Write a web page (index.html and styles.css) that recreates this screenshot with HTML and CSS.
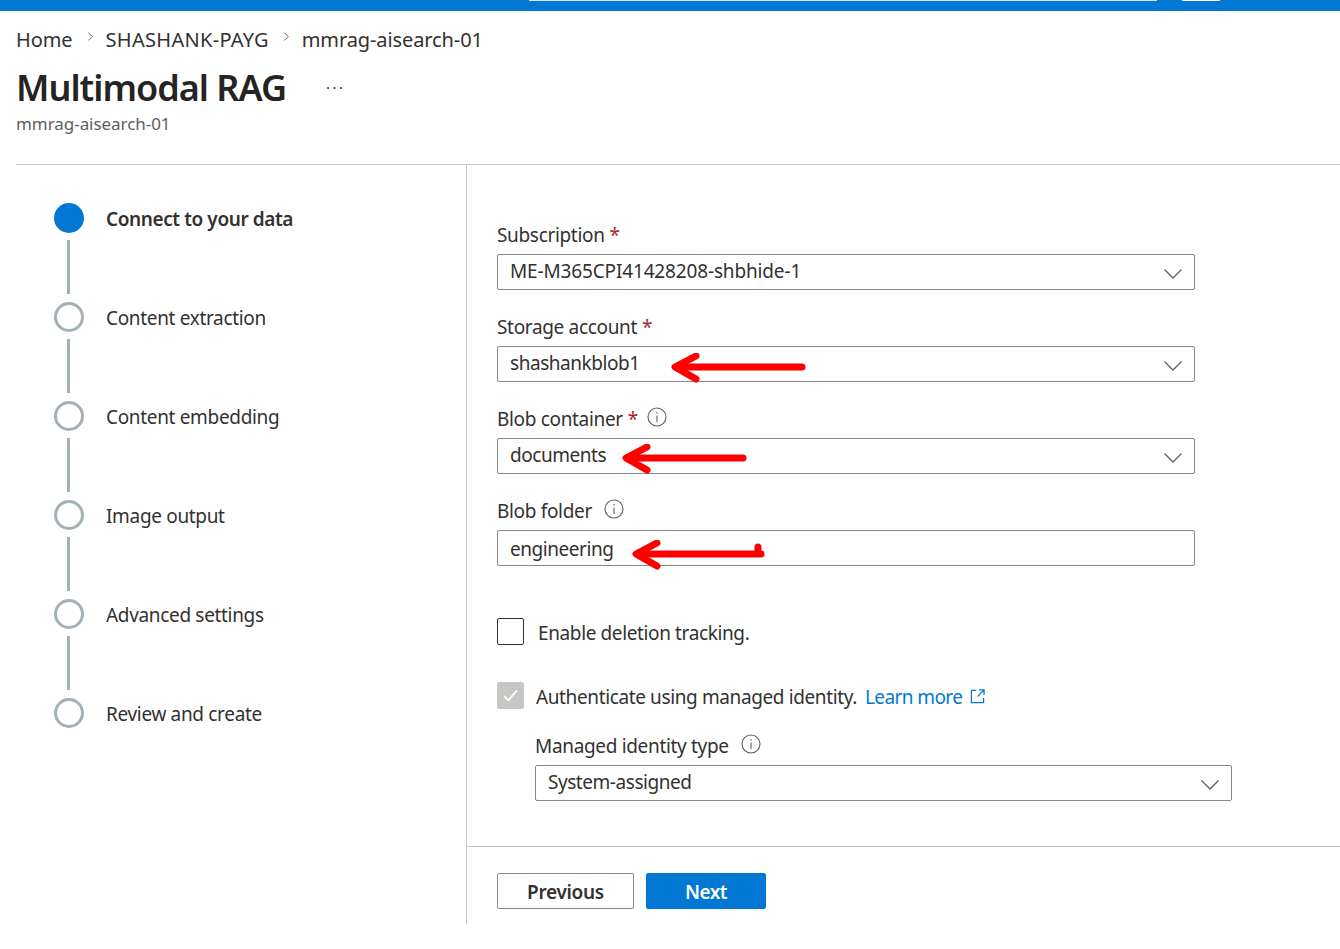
FILE: index.html
```html
<!DOCTYPE html>
<html lang="en">
<head>
    <meta charset="UTF-8">
    <meta name="viewport" content="width=device-width, initial-scale=1.0">
    <title>Multimodal RAG</title>
    <link rel="stylesheet" href="styles.css">
</head>
<body>

<div class="topbar">
    <div class="topbar-search"></div>
    <div class="topbar-button"></div>
</div>

<div class="page-head">
    <div class="breadcrumb">
        <span>Home</span>
        <svg class="crumb-sep" viewBox="0 0 8 12"><path d="M1.5 1.5 6 6l-4.500 4.500"/></svg>
        <span class="crumb-caps">SHASHANK-PAYG</span>
        <svg class="crumb-sep" viewBox="0 0 8 12"><path d="M1.5 1.5 6 6l-4.500 4.500"/></svg>
        <span>mmrag-aisearch-01</span>
    </div>
    <div class="title-row">
        <h1>Multimodal RAG</h1>
        <span class="more">···</span>
    </div>
    <div class="subtitle">mmrag-aisearch-01</div>
</div>

<div class="wizard">
    <div class="steps">
        <div class="step active">
            <div class="step-dot"></div>
            <span class="step-name">Connect to your data</span>
        </div>
        <div class="step">
            <div class="step-dot"></div>
            <span class="step-name">Content extraction</span>
        </div>
        <div class="step">
            <div class="step-dot"></div>
            <span class="step-name">Content embedding</span>
        </div>
        <div class="step">
            <div class="step-dot"></div>
            <span class="step-name">Image output</span>
        </div>
        <div class="step">
            <div class="step-dot"></div>
            <span class="step-name">Advanced settings</span>
        </div>
        <div class="step">
            <div class="step-dot"></div>
            <span class="step-name">Review and create</span>
        </div>
    </div>

    <div class="panel">
        <div class="form">
            <div class="field">
                <div class="field-label">Subscription <span class="req">*</span></div>
                <div class="box">
                    <span class="value-id">ME-M365CPI41428208-shbhide-1</span>
                    <svg class="chevron" viewBox="0 0 18 10"><path d="M.5.5 9 9 17.500.5"/></svg>
                </div>
            </div>
            <div class="field">
                <div class="field-label">Storage account <span class="req">*</span></div>
                <div class="box">
                    <span>shashankblob1</span>
                    <svg class="chevron" viewBox="0 0 18 10"><path d="M.5.5 9 9 17.500.5"/></svg>
                    <svg class="arrow arrow-storage" viewBox="0 0 136 30"><path d="M131 14H6"/><path d="M25 3 4 14l21 12"/></svg>
                </div>
            </div>
            <div class="field">
                <div class="field-label">Blob container <span class="req">*</span>
                    <svg class="info" viewBox="0 0 20 20"><circle cx="10" cy="10" r="9"/><path d="M10 8.500V15M10 5v1.500"/></svg>
                </div>
                <div class="box">
                    <span>documents</span>
                    <svg class="chevron" viewBox="0 0 18 10"><path d="M.5.5 9 9 17.500.5"/></svg>
                    <svg class="arrow arrow-container" viewBox="0 0 136 30"><path d="M121 14H6"/><path d="M25 3 4 14l21 12"/></svg>
                </div>
            </div>
            <div class="field">
                <div class="field-label">Blob folder
                    <svg class="info" viewBox="0 0 20 20"><circle cx="10" cy="10" r="9"/><path d="M10 8.500V15M10 5v1.500"/></svg>
                </div>
                <div class="box text-input">
                    <span>engineering</span>
                    <svg class="arrow arrow-folder" viewBox="0 0 136 30"><path d="M129 14H6M126 14v-7"/><path d="M25 3 4 14l21 12"/></svg>
                </div>
            </div>

            <label class="check check-deletion">
                <span class="checkbox"></span>
                <span class="check-text">Enable deletion tracking.</span>
            </label>

            <div class="check check-identity">
                <span class="checkbox disabled">
                    <svg viewBox="0 0 16 16"><path d="M2 8.500 6 12.500 14 3.500"/></svg>
                </span>
                <span class="check-text">Authenticate using managed identity.</span>
                <a class="learn" href="#">Learn more
                    <svg viewBox="0 0 16 16"><path d="M6.500 1.500H1.500v13h13v-5M9.500 1h5.500v5.500M15 1 8 8"/></svg>
                </a>
            </div>

            <div class="field nested">
                <div class="field-label">Managed identity type
                    <svg class="info" viewBox="0 0 20 20"><circle cx="10" cy="10" r="9"/><path d="M10 8.500V15M10 5v1.500"/></svg>
                </div>
                <div class="box">
                    <span>System-assigned</span>
                    <svg class="chevron" viewBox="0 0 18 10"><path d="M.5.5 9 9 17.500.5"/></svg>
                </div>
            </div>
        </div>

        <div class="actions">
            <button class="btn">Previous</button>
            <button class="btn primary">Next</button>
        </div>
    </div>
</div>

</body>
</html>
```

FILE: styles.css
```css
body {
    font-family: "Noto Sans", "Open Sans", sans-serif;
    font-size: 19px;
    color: #323130;
    margin: 0;
    background-color: #ffffff;
}
.topbar {
    height: 11px;
    background-color: #0078d4;
    display: flex;
    padding-left: 529px;
}
.topbar-search {
    width: 628px;
    height: 1px;
    background-color: #d8e6f2;
}
.topbar-button {
    width: 38px;
    height: 1px;
    margin-left: 25px;
    background-color: #ffffff;
}
.page-head {
    padding-left: 16px;
}
.breadcrumb {
    display: flex;
    align-items: center;
    height: 28px;
    margin-top: 14px;
    font-size: 20px;
    letter-spacing: -0.1px;
}
.crumb-caps {
    letter-spacing: 0.3px;
}
.crumb-sep {
    width: 7px;
    height: 11px;
    margin: -6px 12px 0 14px;
    fill: none;
    stroke: #605e5c;
    stroke-width: 1.1;
}
.title-row {
    display: flex;
    align-items: center;
    height: 50px;
    margin-top: 9px;
}
h1 {
    font-size: 36px;
    font-weight: 600;
    margin: 0;
    color: #252423;
    letter-spacing: -1px;
}
.more {
    margin-left: 40px;
    font-size: 15px;
    letter-spacing: 2.5px;
    color: #323130;
}
.subtitle {
    font-size: 17px;
    color: #605e5c;
    height: 24px;
    line-height: 24px;
    letter-spacing: -0.05px;
}
.wizard {
    display: flex;
    height: 759px;
    margin: 28px 0 0 16px;
    border-top: 1px solid #c8c6c4;
}
.steps {
    width: 451px;
    padding: 38px 0 0 38px;
    box-sizing: border-box;
    border-right: 1px solid #c8c6c4;
    flex-shrink: 0;
}
.step {
    display: flex;
    height: 99px;
    gap: 22px;
    position: relative;
}
.step-dot {
    width: 30px;
    height: 30px;
    border: 3px solid #a3b1b7;
    border-radius: 50%;
    box-sizing: border-box;
}
.step:not(:last-child)::after {
    content: "";
    position: absolute;
    left: 13px;
    top: 37px;
    width: 3px;
    height: 54px;
    background-color: #a3b1b7;
}
.step.active .step-dot {
    background-color: #0078d4;
    border-color: #0078d4;
}
.step-name {
    line-height: 32px;
    letter-spacing: -0.33px;
}
.step.active .step-name {
    font-weight: 600;
    letter-spacing: -0.4px;
}
.panel {
    flex: 1;
    display: flex;
    flex-direction: column;
}
.form {
    flex: 1;
    padding: 53px 0 0 30px;
}
.field {
    width: 698px;
    margin-bottom: 20px;
}
.field-label {
    display: flex;
    align-items: center;
    height: 32px;
    padding-top: 2px;
    margin-bottom: 4px;
    box-sizing: border-box;
    letter-spacing: -0.33px;
}
.req {
    color: #a4262c;
    margin-left: 5px;
}
.info {
    width: 20px;
    height: 20px;
    margin: -4px 0 0 12px;
    fill: none;
    stroke: #605e5c;
    stroke-width: 1.1;
}
.req + .info {
    margin-left: 9px;
}
.box {
    position: relative;
    display: flex;
    align-items: center;
    justify-content: space-between;
    height: 36px;
    padding: 0 12px 3px;
    border: 1px solid #8a8886;
    border-radius: 2px;
    box-sizing: border-box;
    letter-spacing: -0.45px;
}
.text-input {
    padding: 1px 12px 0;
}
.value-id {
    letter-spacing: -0.15px;
}
.chevron {
    width: 18px;
    height: 10px;
    margin: 6px 0 0;
    fill: none;
    stroke: #605e5c;
    stroke-width: 1.3;
}
/* red hand-drawn annotations on top of the fields */
.arrow {
    position: absolute;
    width: 136px;
    height: 30px;
    fill: none;
    stroke: #ff0000;
    stroke-width: 7;
    stroke-linecap: round;
    stroke-linejoin: round;
}
.arrow-storage {
    left: 173px;
    top: 6px;
}
.arrow-container {
    left: 124px;
    top: 5px;
}
.arrow-folder {
    left: 134px;
    top: 9px;
}
.check {
    display: flex;
    align-items: center;
    height: 27px;
    letter-spacing: -0.38px;
}
.check-text {
    margin-top: 2px;
}
.check-deletion {
    margin-top: 52px;
    gap: 14px;
}
.check-identity {
    margin-top: 37px;
    gap: 12px;
}
.checkbox {
    width: 27px;
    height: 27px;
    border: 1px solid #323130;
    border-radius: 2px;
    box-sizing: border-box;
    flex-shrink: 0;
}
.checkbox.disabled {
    border-color: #c8c6c4;
    background-color: #c8c6c4;
}
.checkbox svg {
    display: block;
    margin: 4px;
    width: 17px;
    height: 17px;
    fill: none;
    stroke: #ffffff;
    stroke-width: 1.7;
}
.learn {
    display: flex;
    align-items: center;
    gap: 8px;
    margin: 2px 0 0 -4px;
    color: #0078d4;
    text-decoration: none;
    letter-spacing: -0.6px;
}
.learn svg {
    width: 15px;
    height: 15px;
    fill: none;
    stroke: #0078d4;
    stroke-width: 1.3;
}
.nested {
    margin: 20px 0 0 38px;
    width: 697px;
}
.actions {
    display: flex;
    gap: 12px;
    height: 78px;
    padding: 26px 0 0 30px;
    border-top: 1px solid #c8c6c4;
    box-sizing: border-box;
}
.btn {
    width: 137px;
    height: 36px;
    font-family: inherit;
    font-size: 19px;
    font-weight: 600;
    color: #323130;
    background-color: #ffffff;
    border: 1px solid #8a8886;
    border-radius: 2px;
    letter-spacing: -0.3px;
    padding: 2px 0 0;
}
.btn.primary {
    width: 120px;
    color: #ffffff;
    background-color: #0078d4;
    border-color: #0078d4;
    letter-spacing: -0.5px;
}
```
